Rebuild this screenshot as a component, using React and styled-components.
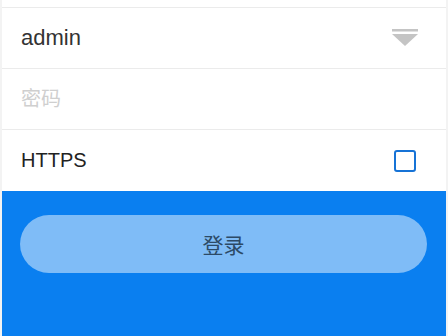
import React, { useState } from 'react';
import styled, { createGlobalStyle } from 'styled-components';

const GlobalStyle = createGlobalStyle`
  html, body {
    margin: 0;
    padding: 0;
    background: #f3f3f3;
    font-family: "Noto Sans", "Noto Sans CJK SC", sans-serif;
  }
`;

const Page = styled.div`
  height: 336px;
  margin: 0 2px;
  display: flex;
  flex-direction: column;
  background: #0a7ff0;
  overflow: hidden;
`;

const Form = styled.div`
  background: #fff;
  display: flex;
  flex-direction: column;
`;

const TopStrip = styled.div`
  height: 7px;
  border-bottom: 1px solid #ebebeb;
`;

const Row = styled.label`
  height: 61px;
  box-sizing: border-box;
  padding: 0 28px 0 19px;
  display: flex;
  align-items: center;
  justify-content: space-between;
  border-bottom: ${p => (p.last ? 'none' : '1px solid #ebebeb')};
`;

const Input = styled.input`
  flex: 1;
  border: none;
  outline: none;
  padding: 0;
  background: transparent;
  font-family: "Liberation Sans", "Noto Sans CJK SC", sans-serif;
  font-size: ${p => p.size || 20}px;
  color: #333;

  &::placeholder {
    color: #cfcfcf;
  }
`;

const Label = styled.span`
  font-family: "Liberation Sans", sans-serif;
  font-size: 20px;
  color: #222;
`;

const Box = styled.span`
  width: 22px;
  height: 22px;
  box-sizing: border-box;
  margin-right: 2px;
  border: 2px solid #1673d6;
  border-radius: 3px;
  background: ${p => (p.checked ? '#1673d6' : '#fff')};
`;

const Actions = styled.div`
  padding: 24px 19px 0 18px;
`;

const LoginButton = styled.button`
  width: 100%;
  height: 58px;
  border: none;
  border-radius: 29px;
  background: rgba(255, 255, 255, 0.48);
  color: #2c4a66;
  font-family: "Noto Sans CJK SC", sans-serif;
  font-size: 21px;
  cursor: pointer;
`;

const DropIcon = () => (
  <svg width="26" height="18" viewBox="0 0 26 18">
    <rect x="0" y="0" width="26" height="2.5" fill="#c4c4c4" />
    <polygon points="0,5 26,5 13,17" fill="#c4c4c4" />
  </svg>
);

const App = () => {
  const [user, setUser] = useState('admin');
  const [password, setPassword] = useState('');
  const [https, setHttps] = useState(false);

  return (
    <>
      <GlobalStyle />
      <Page>
        <Form>
          <TopStrip />
          <Row>
            <Input size={22} value={user} onChange={e => setUser(e.target.value)} />
            <DropIcon />
          </Row>
          <Row>
            <Input type="password" placeholder="密码" value={password} onChange={e => setPassword(e.target.value)} />
          </Row>
          <Row last onClick={() => setHttps(!https)}>
            <Label>HTTPS</Label>
            <Box checked={https} />
          </Row>
        </Form>
        <Actions>
          <LoginButton>登录</LoginButton>
        </Actions>
      </Page>
    </>
  );
};

export default App;
